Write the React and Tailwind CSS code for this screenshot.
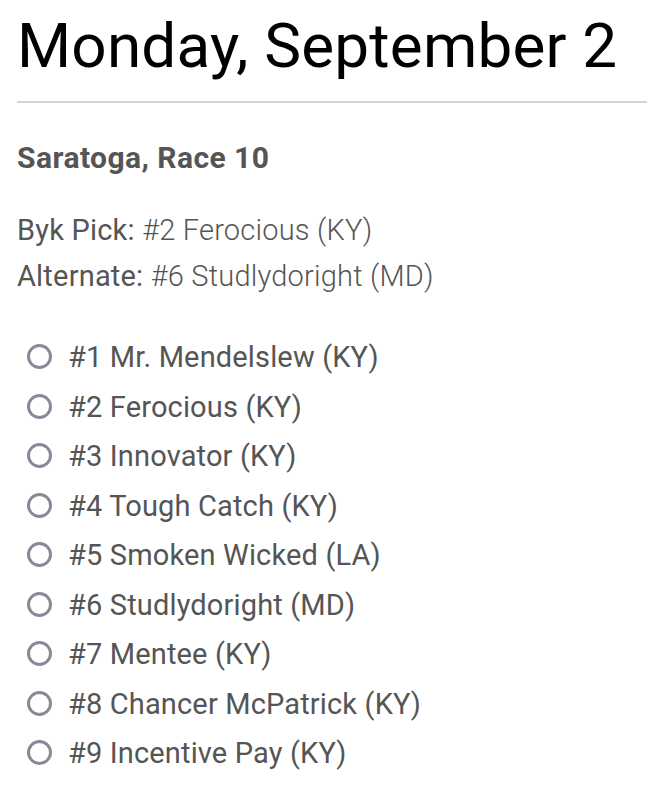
import React from "react";

const horses = [
  "#1 Mr. Mendelslew (KY)",
  "#2 Ferocious (KY)",
  "#3 Innovator (KY)",
  "#4 Tough Catch (KY)",
  "#5 Smoken Wicked (LA)",
  "#6 Studlydoright (MD)",
  "#7 Mentee (KY)",
  "#8 Chancer McPatrick (KY)",
  "#9 Incentive Pay (KY)",
];

export default function App() {
  return (
    <div className="min-h-[800px] bg-white pl-[17px] font-['Roboto',sans-serif]">
      <h1 className="pt-[10px] text-[62px] leading-[72px] font-normal text-black tracking-[0.2px]">
        Monday, September 2
      </h1>
      <div className="mt-[19px] h-[2px] bg-[#d2d2d2]" />
      <h2 className="mt-[38px] text-[30px] leading-[34px] font-bold tracking-[0.45px] text-[#555555]">
        Saratoga, Race 10
      </h2>
      <div className="mt-[32px] text-[29px] leading-[46px] tracking-[0.2px] text-[#555555]">
        <p>
          <span className="font-normal">Byk Pick:</span>{" "}
          <span className="font-light">#2 Ferocious (KY)</span>
        </p>
        <p>
          <span className="font-normal">Alternate:</span>{" "}
          <span className="font-light">#6 Studlydoright (MD)</span>
        </p>
      </div>
      <ul className="mt-[33px] flex flex-col">
        {horses.map((h) => (
          <li key={h} className="flex h-[49.5px] items-center pl-[10px]">
            <span className="h-[25px] w-[25px] shrink-0 rounded-full border-[3px] border-[#8a8896]" />
            <span className="ml-[16px] pt-[1px] text-[29px] leading-[34px] tracking-[0.15px] text-[#555555]">{h}</span>
          </li>
        ))}
      </ul>
    </div>
  );
}
